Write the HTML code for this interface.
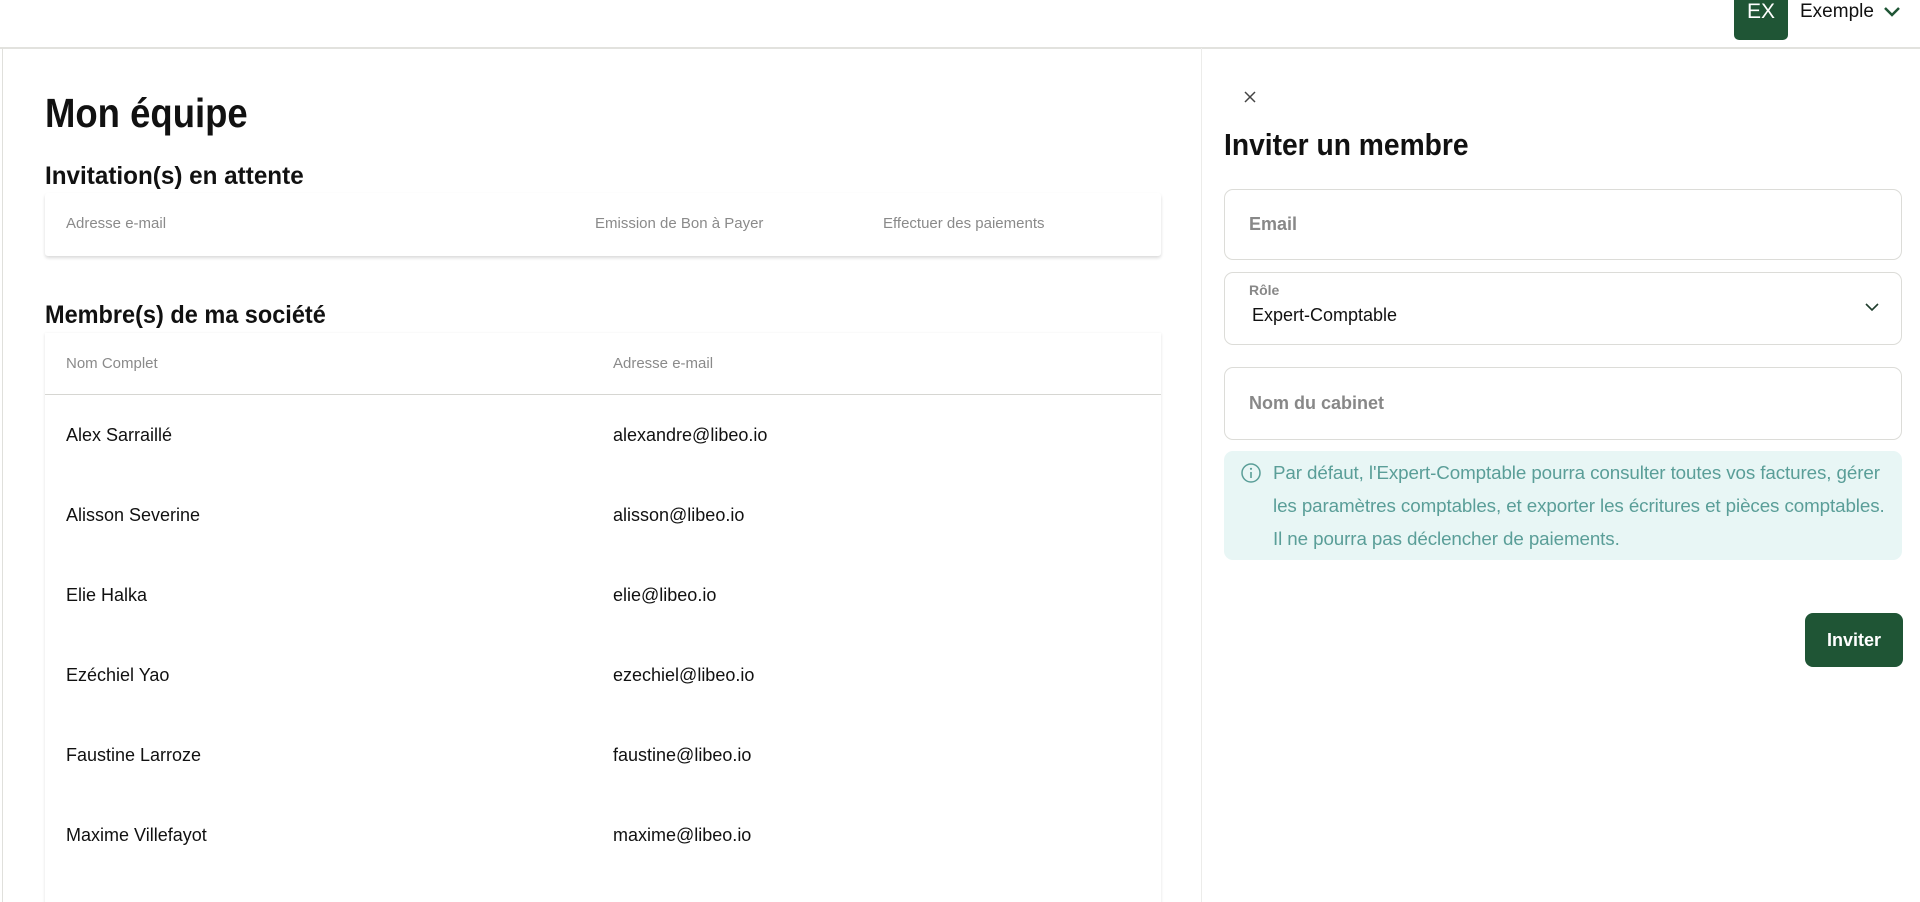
<!DOCTYPE html>
<html><head><meta charset="utf-8">
<style>
*{box-sizing:border-box;margin:0;padding:0}
html,body{width:1920px;height:902px;overflow:hidden}
body{background:#fff;font-family:"Liberation Sans",sans-serif;position:relative;color:#111}
.abs{position:absolute}
.h{font-family:"Liberation Sans Narrow","Liberation Sans",sans-serif;font-weight:bold;color:#111;white-space:nowrap;transform-origin:left center}
.th{font-size:15px;color:#8a8a8a;white-space:nowrap}
.td{font-size:18px;color:#111;white-space:nowrap}
.inp{position:absolute;left:1224px;width:678px;border:1.5px solid #dcdcd8;border-radius:9px;background:#fff}
</style></head><body>
<div class="abs" style="left:0;top:47px;width:1920px;height:2px;background:#e2e2de"></div>
<div class="abs" style="left:2px;top:48px;width:1px;height:854px;background:#e0e0dc"></div>
<div class="abs" style="left:1734px;top:0;width:54px;height:40px;background:#1f5535;border-radius:0 0 5px 5px;color:#fff;font-size:21px;text-align:center;line-height:24px">EX</div>
<div class="abs" style="left:1800px;top:0;font-size:19px;line-height:24px;color:#111">Exemple</div>
<svg class="abs" style="left:1883px;top:6px" width="18" height="12" viewBox="0 0 18 12"><path d="M2 2 L9 9 L16 2" fill="none" stroke="#1f5535" stroke-width="2.5"/></svg>

<div class="abs" style="left:1201px;top:48px;width:1px;height:854px;background:#ececea"></div>

<div class="abs h" style="left:45px;top:88px;font-size:41px;line-height:50px;transform:scaleX(0.89)">Mon équipe</div>
<div class="abs h" style="left:45px;top:161px;font-size:25px;line-height:30px;transform:scaleX(0.97)">Invitation(s) en attente</div>
<div class="abs" style="left:45px;top:193px;width:1116px;height:63px;box-shadow:0 2px 3px rgba(0,0,0,.15);border-radius:3px;background:#fff"></div>
<div class="abs th" style="left:66px;top:215px">Adresse e-mail</div>
<div class="abs th" style="left:595px;top:215px">Emission de Bon à Payer</div>
<div class="abs th" style="left:883px;top:215px">Effectuer des paiements</div>

<div class="abs h" style="left:45px;top:300px;font-size:25px;line-height:30px;transform:scaleX(0.94)">Membre(s) de ma société</div>
<div class="abs" style="left:45px;top:333px;width:1116px;height:600px;box-shadow:0 1px 3px rgba(0,0,0,.12);background:#fff"></div>
<div class="abs th" style="left:66px;top:355px">Nom Complet</div>
<div class="abs th" style="left:613px;top:355px">Adresse e-mail</div>
<div class="abs" style="left:45px;top:394px;width:1116px;height:1px;background:#d6d6d2"></div>
<div class="abs td" style="left:66px;top:425px">Alex Sarraillé</div><div class="abs td" style="left:613px;top:425px">alexandre@libeo.io</div>
<div class="abs td" style="left:66px;top:505px">Alisson Severine</div><div class="abs td" style="left:613px;top:505px">alisson@libeo.io</div>
<div class="abs td" style="left:66px;top:585px">Elie Halka</div><div class="abs td" style="left:613px;top:585px">elie@libeo.io</div>
<div class="abs td" style="left:66px;top:665px">Ezéchiel Yao</div><div class="abs td" style="left:613px;top:665px">ezechiel@libeo.io</div>
<div class="abs td" style="left:66px;top:745px">Faustine Larroze</div><div class="abs td" style="left:613px;top:745px">faustine@libeo.io</div>
<div class="abs td" style="left:66px;top:825px">Maxime Villefayot</div><div class="abs td" style="left:613px;top:825px">maxime@libeo.io</div>

<svg class="abs" style="left:1243px;top:90px" width="14" height="14" viewBox="0 0 14 14"><path d="M2 2L12 12M12 2L2 12" stroke="#444" stroke-width="1.5"/></svg>
<div class="abs h" style="left:1224px;top:126px;font-size:31px;line-height:38px;transform:scaleX(0.91)">Inviter un membre</div>

<div class="inp" style="top:189px;height:71px"></div>
<div class="abs" style="left:1249px;top:214px;font-size:18px;font-weight:bold;color:#888">Email</div>
<div class="inp" style="top:272px;height:73px"></div>
<div class="abs" style="left:1249px;top:282px;font-size:14px;font-weight:bold;color:#888">Rôle</div>
<div class="abs" style="left:1252px;top:305px;font-size:18px;color:#111">Expert-Comptable</div>
<svg class="abs" style="left:1864px;top:302px" width="16" height="11" viewBox="0 0 16 11"><path d="M2 2L8 8L14 2" fill="none" stroke="#1f3d2c" stroke-width="1.6"/></svg>
<div class="inp" style="top:367px;height:73px"></div>
<div class="abs" style="left:1249px;top:393px;font-size:18px;font-weight:bold;color:#888">Nom du cabinet</div>

<div class="abs" style="left:1224px;top:451px;width:678px;height:109px;background:#e8f6f5;border-radius:9px"></div>
<svg class="abs" style="left:1240px;top:462px" width="22" height="22" viewBox="0 0 22 22"><circle cx="11" cy="11" r="9" fill="none" stroke="#5a9e98" stroke-width="1.5"/><path d="M11 10v6" stroke="#5a9e98" stroke-width="1.6"/><circle cx="11" cy="6.8" r="1.1" fill="#5a9e98"/></svg>
<div class="abs" style="left:1273px;top:456px;width:630px;font-size:18.8px;line-height:33px;color:#5a9e98;letter-spacing:-0.1px">Par défaut, l'Expert-Comptable pourra consulter toutes vos factures, gérer<br>les paramètres comptables, et exporter les écritures et pièces comptables.<br>Il ne pourra pas déclencher de paiements.</div>

<div class="abs" style="left:1805px;top:613px;width:98px;height:54px;background:#1f5535;border-radius:8px;color:#fff;font-weight:bold;font-size:18px;text-align:center;line-height:54px">Inviter</div>
</body></html>
